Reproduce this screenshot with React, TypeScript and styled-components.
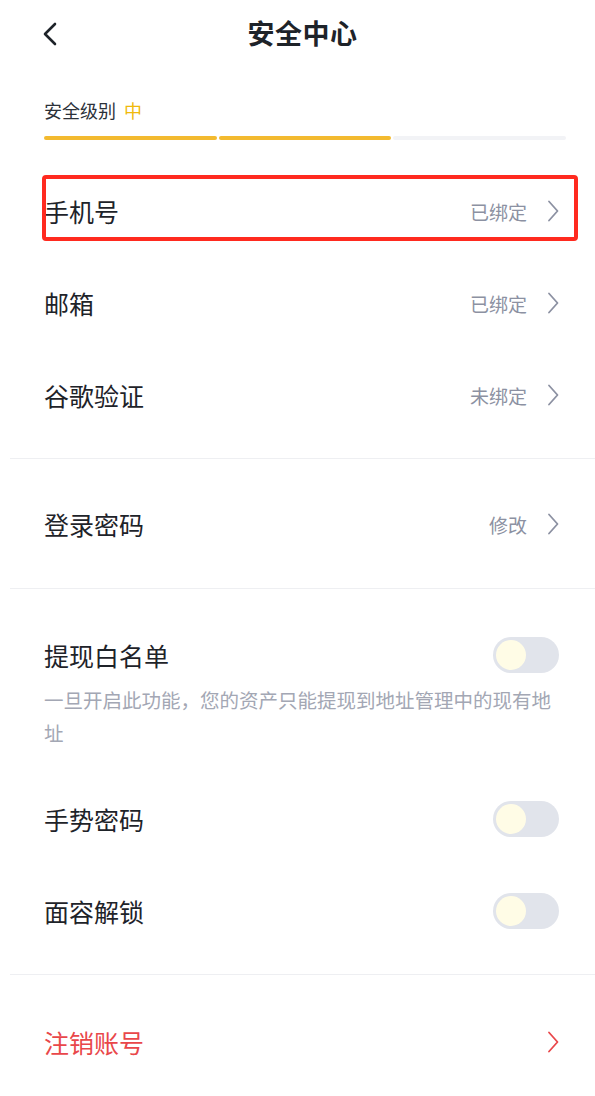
import React from 'react';
import styled, { createGlobalStyle } from 'styled-components';

const GlobalStyle = createGlobalStyle`
  * {
    box-sizing: border-box;
  }
  body {
    margin: 0;
    background: #ffffff;
    font-family: "Noto Sans CJK SC", "Noto Sans", sans-serif;
    color: #1e2329;
  }
`;

const Page = styled.div`
  width: 595px;
  min-height: 1096px;
  background: #ffffff;
`;

const Header = styled.div`
  position: relative;
  height: 68px;
  display: flex;
  align-items: center;
  justify-content: center;
  padding-bottom: 4px;
`;

const BackButton = styled.div`
  position: absolute;
  left: 42px;
  top: 22px;
  width: 16px;
  height: 24px;
  display: flex;
`;

const Title = styled.h1`
  margin: 0 0 0 10px;
  font-size: 27px;
  font-weight: 700;
  color: #1e2329;
  letter-spacing: 0.5px;
`;

const Level = styled.div`
  padding: 0 29px 0 44px;
  margin-top: 28px;
`;

const LevelLabel = styled.div`
  display: flex;
  align-items: center;
  gap: 8px;
  height: 28px;
  font-size: 18px;
  color: #2b3139;
`;

const LevelValue = styled.span`
  color: #f0b90b;
`;

const Bar = styled.div`
  display: flex;
  gap: 2px;
  margin-top: 12px;
  height: 4px;
`;

const Segment = styled.div<{ active?: boolean }>`
  flex: 1;
  border-radius: 2px;
  background: ${p => (p.active ? '#f3ba2f' : '#f2f3f6')};
`;

const Section = styled.div<{ top?: number; bottom?: number }>`
  padding-top: ${p => p.top ?? 0}px;
  padding-bottom: ${p => p.bottom ?? 0}px;
`;

const Divider = styled.div`
  margin-left: 10px;
  height: 1px;
  background: #eeeff2;
`;

const Row = styled.div`
  position: relative;
  height: 92px;
  display: flex;
  align-items: center;
  padding: 0 36px 0 44px;
`;

const Label = styled.span<{ danger?: boolean }>`
  flex: 1;
  font-size: 25px;
  color: ${p => (p.danger ? '#e9474a' : '#1e2329')};
`;

const Status = styled.span`
  font-size: 19px;
  color: #8c91a2;
  margin-right: 20px;
`;

const Highlight = styled.div`
  position: absolute;
  left: 42px;
  top: 10px;
  width: 536px;
  height: 66px;
  border: 4px solid #ff2a1f;
  border-radius: 4px;
  pointer-events: none;
`;

const Switch = styled.div`
  width: 66px;
  height: 36px;
  border-radius: 18px;
  background: #e1e4eb;
  padding: 3px;
  display: flex;
  align-items: center;
`;

const Knob = styled.div`
  width: 30px;
  height: 30px;
  border-radius: 50%;
  background: #fffce6;
`;

const SwitchHead = styled.div`
  height: 56px;
  display: flex;
  align-items: center;
  padding: 0 36px 0 44px;
  margin-top: 38px;
`;

const Note = styled.p`
  margin: 0 0 24px;
  padding: 0 29px 0 44px;
  font-size: 19.5px;
  line-height: 33px;
  color: #a3a7b4;
`;

function Chevron({ color = '#8c91a2' }: { color?: string }) {
  return (
    <svg width="12" height="22" viewBox="0 0 12 22" fill="none">
      <path d="M2 1.5 L10.5 11 L2 20.5" stroke={color} strokeWidth="1.8" strokeLinecap="round" strokeLinejoin="round" />
    </svg>
  );
}

const Toggle = () => (
  <Switch>
    <Knob />
  </Switch>
);

const bindings = [
  { title: '手机号', status: '已绑定', marked: true },
  { title: '邮箱', status: '已绑定' },
  { title: '谷歌验证', status: '未绑定' },
];

export default function App() {
  return (
    <Page>
      <GlobalStyle />
      <Header>
        <BackButton>
          <svg width="16" height="24" viewBox="0 0 16 24" fill="none">
            <path d="M13 2 L3 12 L13 22" stroke="#1e2329" strokeWidth="2.6" strokeLinecap="round" strokeLinejoin="round" />
          </svg>
        </BackButton>
        <Title>安全中心</Title>
      </Header>

      <Level>
        <LevelLabel>
          安全级别 <LevelValue>中</LevelValue>
        </LevelLabel>
        <Bar>
          <Segment active />
          <Segment active />
          <Segment />
        </Bar>
      </Level>

      <Section top={25} bottom={17}>
        {bindings.map(item => (
          <Row key={item.title}>
            <Label>{item.title}</Label>
            <Status>{item.status}</Status>
            <Chevron />
            {item.marked && <Highlight />}
          </Row>
        ))}
      </Section>
      <Divider />

      <Section top={19} bottom={18}>
        <Row>
          <Label>登录密码</Label>
          <Status>修改</Status>
          <Chevron />
        </Row>
      </Section>
      <Divider />

      <Section bottom={17}>
        <SwitchHead>
          <Label>提现白名单</Label>
          <Toggle />
        </SwitchHead>
        <Note>一旦开启此功能，您的资产只能提现到地址管理中的现有地址</Note>
        <Row>
          <Label>手势密码</Label>
          <Toggle />
        </Row>
        <Row>
          <Label>面容解锁</Label>
          <Toggle />
        </Row>
      </Section>
      <Divider />

      <Section top={21}>
        <Row>
          <Label danger>注销账号</Label>
          <Chevron color="#e9474a" />
        </Row>
      </Section>
    </Page>
  );
}
